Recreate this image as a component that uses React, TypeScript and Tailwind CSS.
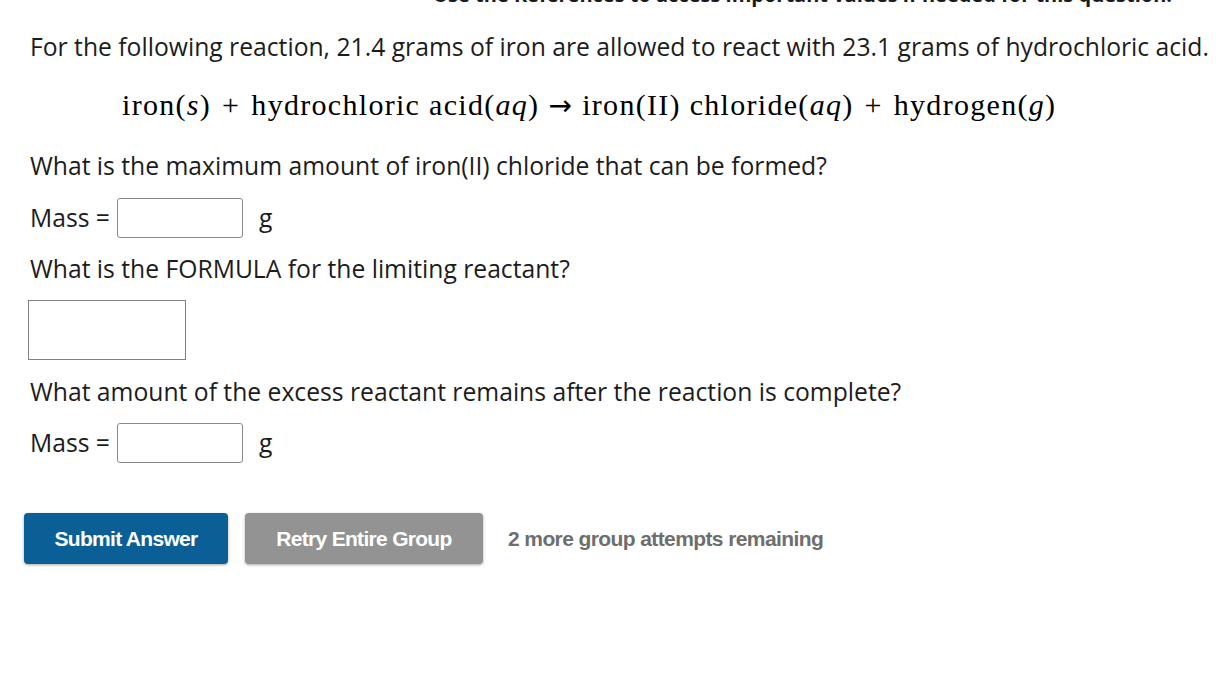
import React from "react";

function MassRow() {
  return (
    <div className="flex items-center h-[40px]">
      <span className="text-[24.7px] leading-[34px] text-[#1c1c1c] mr-[7px]">Mass =</span>
      <div className="w-[126px] h-[40px] border border-[#8a8a8a] rounded-[3px] bg-white" />
      <span className="text-[24.7px] leading-[34px] text-[#1c1c1c] ml-[16px]">g</span>
    </div>
  );
}

function Op({ children }: { children: React.ReactNode }) {
  return <span className="mx-[11px]">{children}</span>;
}

export default function App() {
  return (
    <div className="w-[1231px] h-[676px] bg-white overflow-hidden" style={{ fontFamily: '"Open Sans", sans-serif' }}>
      <div className="mt-[-17px] ml-[433px] text-[20px] font-bold text-[#1a1a1a] leading-[24px] whitespace-nowrap">
        Use the References to access important values if needed for this question.
      </div>

      <div className="pl-[30px]">
        <p className="mt-[23px] text-[24.7px] text-[#1c1c1c] leading-[34px] whitespace-nowrap">
          For the following reaction, 21.4 grams of iron are allowed to react with 23.1 grams of hydrochloric acid.
        </p>

        <div
          className="mt-[21px] ml-[92px] h-[40px] text-[30px] leading-[40px] text-black whitespace-nowrap tracking-[1.3px]"
          style={{ fontFamily: '"Liberation Serif", serif' }}
        >
          <span>iron(<i>s</i>)</span>
          <Op>+</Op>
          <span>hydrochloric acid(<i>aq</i>)</span>
          <span className="mx-[9px]">
            <span style={{ fontFamily: '"DejaVu Sans", sans-serif' }} className="text-[28px] leading-[0]">→</span>
          </span>
          <span>iron(II) chloride(<i>aq</i>)</span>
          <Op>+</Op>
          <span>hydrogen(<i>g</i>)</span>
        </div>

        <p className="mt-[24px] text-[24.7px] text-[#1c1c1c] leading-[34px]">
          What is the maximum amount of iron(II) chloride that can be formed?
        </p>

        <div className="mt-[15px]">
          <MassRow />
        </div>

        <p className="mt-[14px] text-[24.7px] text-[#1c1c1c] leading-[34px]">
          What is the FORMULA for the limiting reactant?
        </p>

        <div className="mt-[14px] ml-[-2px] w-[158px] h-[60px] border border-[#808080] bg-white" />

        <p className="mt-[15px] text-[24.7px] text-[#1c1c1c] leading-[34px]">
          What amount of the excess reactant remains after the reaction is complete?
        </p>

        <div className="mt-[14px]">
          <MassRow />
        </div>

        <div className="mt-[50px] ml-[-6px] flex items-center" style={{ fontFamily: '"Liberation Sans", Arial, sans-serif' }}>
          <button className="w-[204px] h-[51px] rounded-[4px] bg-[#0b5f97] text-white font-bold text-[21px] shadow-[0_1px_3px_rgba(0,0,0,0.35)] tracking-[-0.7px]">
            Submit Answer
          </button>
          <button className="ml-[17px] w-[238px] h-[51px] rounded-[4px] bg-[#939393] text-white font-bold text-[21px] shadow-[0_1px_3px_rgba(0,0,0,0.35)] tracking-[-0.7px]">
            Retry Entire Group
          </button>
          <span className="ml-[25px] text-[21px] font-bold text-[#6e6e6e] tracking-[-0.6px]">
            2 more group attempts remaining
          </span>
        </div>
      </div>
    </div>
  );
}
